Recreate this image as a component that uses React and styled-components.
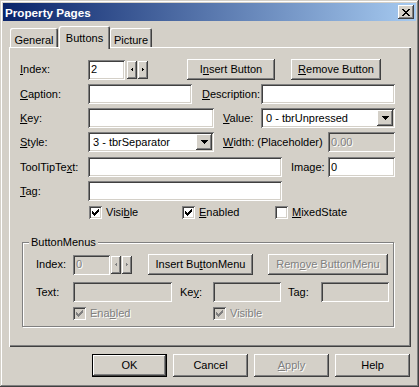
import React from 'react';
import styled, { createGlobalStyle, css } from 'styled-components';

const face = '#D4D0C8';

const GlobalStyle = createGlobalStyle`
  html, body { margin: 0; padding: 0; background: ${face}; }
  body {
    font-family: "Liberation Sans", Arial, sans-serif;
    font-size: 11px;
    line-height: 13px;
    color: #000;
  }
  * { box-sizing: border-box; }
  u { text-underline-offset: 1px; }
`;

const raised = css`
  box-shadow: inset -1px -1px #404040, inset 1px 1px #fff,
    inset -2px -2px #808080, inset 2px 2px ${face};
`;

const sunken = css`
  box-shadow: inset 1px 1px #808080, inset -1px -1px #fff,
    inset 2px 2px #404040, inset -2px -2px ${face};
`;

const disabledText = css`
  color: #808080;
  text-shadow: 1px 1px 0 #fff;
`;

const Window = styled.div`
  width: 419px;
  height: 387px;
  padding: 3px;
  background: ${face};
  box-shadow: inset -1px -1px #404040, inset 1px 1px ${face},
    inset -2px -2px #808080, inset 2px 2px #fff;
  display: flex;
  flex-direction: column;
`;

const TitleBar = styled.div`
  height: 18px;
  flex: none;
  display: flex;
  align-items: center;
  justify-content: space-between;
  padding: 0 2px;
  background: linear-gradient(to right, #0a246a, #a6caf0);
`;

const Title = styled.span`
  color: #fff;
  font-weight: bold;
  font-size: 11.7px;
`;

const CloseBtn = styled.div`
  width: 16px;
  height: 14px;
  background: ${face};
  ${raised};
  display: flex;
  align-items: center;
  justify-content: center;
  padding-right: 1px;
`;

const Body = styled.div`
  padding: 5px 5px 0 6px;
`;

const TabStrip = styled.div`
  position: relative;
  z-index: 1;
  height: 21px;
  display: flex;
  align-items: flex-end;
  padding-left: 1px;
`;

const Tab = styled.div`
  width: ${p => p.$w}px;
  height: ${p => (p.$active ? 23 : 19)}px;
  margin-left: ${p => p.$ml || 0}px;
  margin-bottom: ${p => (p.$active ? -2 : 0)}px;
  padding-top: 6px;
  text-align: center;
  background: ${face};
  border-radius: 2px 2px 0 0;
  box-shadow: inset 1px 1px #fff, inset -1px 0 #404040, inset -2px 0 #808080;
`;

const Panel = styled.div`
  width: 402px;
  height: 300px;
  padding: 12px 0 0 11px;
  background: ${face};
  box-shadow: inset 1px 1px #fff, inset -1px -1px #404040, inset -2px -2px #808080;
`;

const Row = styled.div`
  display: flex;
  align-items: center;
  height: ${p => p.$h}px;
  margin-top: ${p => p.$mt || 0}px;
`;

const Label = styled.span`
  flex: none;
  width: ${p => p.$w}px;
  margin-left: ${p => p.$ml || 0}px;
  white-space: nowrap;
`;

const TextBox = styled.div`
  flex: none;
  width: ${p => p.$w}px;
  height: 20px;
  margin-left: ${p => p.$ml || 0}px;
  padding: 0 3px;
  display: flex;
  align-items: center;
  background: ${p => (p.$disabled ? face : '#fff')};
  ${sunken};
  ${p => p.$disabled && disabledText};
`;

const Combo = styled.div`
  flex: none;
  width: ${p => p.$w}px;
  height: 20px;
  padding: 2px;
  display: flex;
  align-items: center;
  background: #fff;
  ${sunken};
`;

const ComboText = styled.span`
  flex: 1;
  padding-left: 3px;
  white-space: nowrap;
`;

const DropBtn = styled.div`
  width: 16px;
  height: 16px;
  background: ${face};
  ${raised};
  display: flex;
  align-items: center;
  justify-content: center;
`;

const SpinBtn = styled.div`
  flex: none;
  width: 10px;
  height: 18px;
  margin-left: ${p => p.$ml || 0}px;
  background: ${face};
  ${raised};
  display: flex;
  align-items: center;
  justify-content: center;
`;

const Button = styled.div`
  flex: none;
  width: ${p => p.$w}px;
  height: ${p => p.$h || 21}px;
  margin-left: ${p => p.$ml || 0}px;
  display: flex;
  align-items: center;
  justify-content: center;
  white-space: nowrap;
  background: ${face};
  ${raised};
  ${p => p.$default && css`border: 1px solid #000;`};
  ${p => p.$disabled && disabledText};
`;

const CheckItem = styled.div`
  flex: none;
  display: flex;
  align-items: center;
  width: ${p => (p.$w ? `${p.$w}px` : 'auto')};
  margin-left: ${p => p.$ml || 0}px;
  ${p => p.$disabled && disabledText};
`;

const Box = styled.span`
  width: 13px;
  height: 13px;
  margin-right: 4px;
  display: flex;
  align-items: center;
  justify-content: center;
  background: ${p => (p.$disabled ? face : '#fff')};
  ${sunken};
`;

const Group = styled.div`
  position: relative;
  width: 372px;
  height: 85px;
  margin: 22px 0 0 2px;
  padding: 11px 0 0 13px;
  border: 1px solid #808080;
  box-shadow: inset 1px 1px #fff, 1px 1px 0 #fff;
`;

const GroupTitle = styled.span`
  position: absolute;
  top: -7px;
  left: 6px;
  padding: 0 2px;
  background: ${face};
`;

const Footer = styled.div`
  display: flex;
  justify-content: flex-end;
  gap: 6px;
  margin-top: 7px;
  padding-right: 1px;
`;

const Px = ({ w, h, d, color = '#000' }) => (
  <svg width={w} height={h} viewBox={`0 0 ${w} ${h}`} shapeRendering="crispEdges">
    <path d={d} fill={color} />
  </svg>
);

const closeX = 'M0 0h2v1H0zM6 0h2v1H6zM1 1h2v1H1zM5 1h2v1H5zM2 2h4v1H2zM3 3h2v1H3zM2 4h4v1H2zM1 5h2v1H1zM5 5h2v1H5zM0 6h2v1H0zM6 6h2v1H6z';
const checkMark = 'M6 0h1v1H6zM5 1h2v1H5zM0 2h1v1H0zM4 2h3v1H4zM0 3h2v1H0zM3 3h3v1H3zM0 4h5v1H0zM1 5h3v1H1zM2 6h1v1H2z';
const dropArrow = 'M0 0h7v1H0zM1 1h5v1H1zM2 2h3v1H2zM3 3h1v1H3z';
const leftArrow = 'M1 0h1v3H1zM0 1h1v1H0z';
const rightArrow = 'M0 0h1v3H0zM1 1h1v1H1z';

const Check = ({ disabled, checked, children, ...rest }) => (
  <CheckItem $disabled={disabled} {...rest}>
    <Box $disabled={disabled}>
      {checked && <Px w={7} h={7} d={checkMark} color={disabled ? '#808080' : '#000'} />}
    </Box>
    <span>{children}</span>
  </CheckItem>
);

const Dropdown = ({ w, value }) => (
  <Combo $w={w}>
    <ComboText>{value}</ComboText>
    <DropBtn>
      <Px w={7} h={4} d={dropArrow} />
    </DropBtn>
  </Combo>
);

const Spinner = ({ disabled, ml }) => {
  const color = disabled ? '#808080' : '#000';
  return (
    <>
      <SpinBtn $ml={ml}><Px w={2} h={3} d={leftArrow} color={color} /></SpinBtn>
      <SpinBtn $ml={1}><Px w={2} h={3} d={rightArrow} color={color} /></SpinBtn>
    </>
  );
};

export default function App() {
  return (
    <>
      <GlobalStyle />
      <Window>
        <TitleBar>
          <Title>Property Pages</Title>
          <CloseBtn>
            <Px w={8} h={7} d={closeX} />
          </CloseBtn>
        </TitleBar>

        <Body>
          <TabStrip>
            <Tab $w={48}>General</Tab>
            <Tab $w={51} $ml={1} $active>Buttons</Tab>
            <Tab $w={42}>Picture</Tab>
          </TabStrip>

          <Panel>
            <Row $h={21}>
              <Label $w={68}><u>I</u>ndex:</Label>
              <TextBox $w={37}>2</TextBox>
              <Spinner ml={2} />
              <Button $w={88} $ml={39}>I<u>n</u>sert Button</Button>
              <Button $w={90} $ml={16}><u>R</u>emove Button</Button>
            </Row>

            <Row $h={20} $mt={4}>
              <Label $w={68}><u>C</u>aption:</Label>
              <TextBox $w={104} />
              <Label $w={59} $ml={10}><u>D</u>escription:</Label>
              <TextBox $w={134} />
            </Row>

            <Row $h={20} $mt={4}>
              <Label $w={68}><u>K</u>ey:</Label>
              <TextBox $w={126} />
              <Label $w={38} $ml={9}><u>V</u>alue:</Label>
              <Dropdown w={134} value="0 - tbrUnpressed" />
            </Row>

            <Row $h={20} $mt={4}>
              <Label $w={68}><u>S</u>tyle:</Label>
              <Dropdown w={126} value="3 - tbrSeparator" />
              <Label $w={105} $ml={9}><u>W</u>idth: (Placeholder)</Label>
              <TextBox $w={67} $disabled>0.00</TextBox>
            </Row>

            <Row $h={20} $mt={5}>
              <Label $w={68}>ToolTipTe<u>x</u>t:</Label>
              <TextBox $w={194} />
              <Label $w={37} $ml={9}>Image:</Label>
              <TextBox $w={67}>0</TextBox>
            </Row>

            <Row $h={20} $mt={4}>
              <Label $w={68}><u>T</u>ag:</Label>
              <TextBox $w={194} />
            </Row>

            <Row $h={15} $mt={4}>
              <Check $ml={69} $w={93} checked>Visi<u>b</u>le</Check>
              <Check $w={93} checked><u>E</u>nabled</Check>
              <Check><u>M</u>ixedState</Check>
            </Row>

            <Group>
              <GroupTitle>ButtonMenus</GroupTitle>
              <Row $h={21}>
                <Label $w={37}>Index:</Label>
                <TextBox $w={37} $disabled>0</TextBox>
                <Spinner ml={1} disabled />
                <Button $w={105} $ml={16}>Insert Bu<u>t</u>tonMenu</Button>
                <Button $w={120} $ml={15} $disabled>Rem<u>o</u>ve ButtonMenu</Button>
              </Row>
              <Row $h={20} $mt={7}>
                <Label $w={37}>Text:</Label>
                <TextBox $w={99} $disabled />
                <Label $w={33} $ml={8}>Ke<u>y</u>:</Label>
                <TextBox $w={68} $disabled />
                <Label $w={33} $ml={7}>Tag:</Label>
                <TextBox $w={68} $disabled />
              </Row>
              <Row $h={15} $mt={4}>
                <Check $ml={37} $w={140} checked disabled>Ena<u>b</u>led</Check>
                <Check checked disabled>Visible</Check>
              </Row>
            </Group>
          </Panel>

          <Footer>
            <Button $w={75} $h={23} $default>OK</Button>
            <Button $w={75} $h={23}>Cancel</Button>
            <Button $w={75} $h={23} $disabled><u>A</u>pply</Button>
            <Button $w={75} $h={23}>Help</Button>
          </Footer>
        </Body>
      </Window>
    </>
  );
}
